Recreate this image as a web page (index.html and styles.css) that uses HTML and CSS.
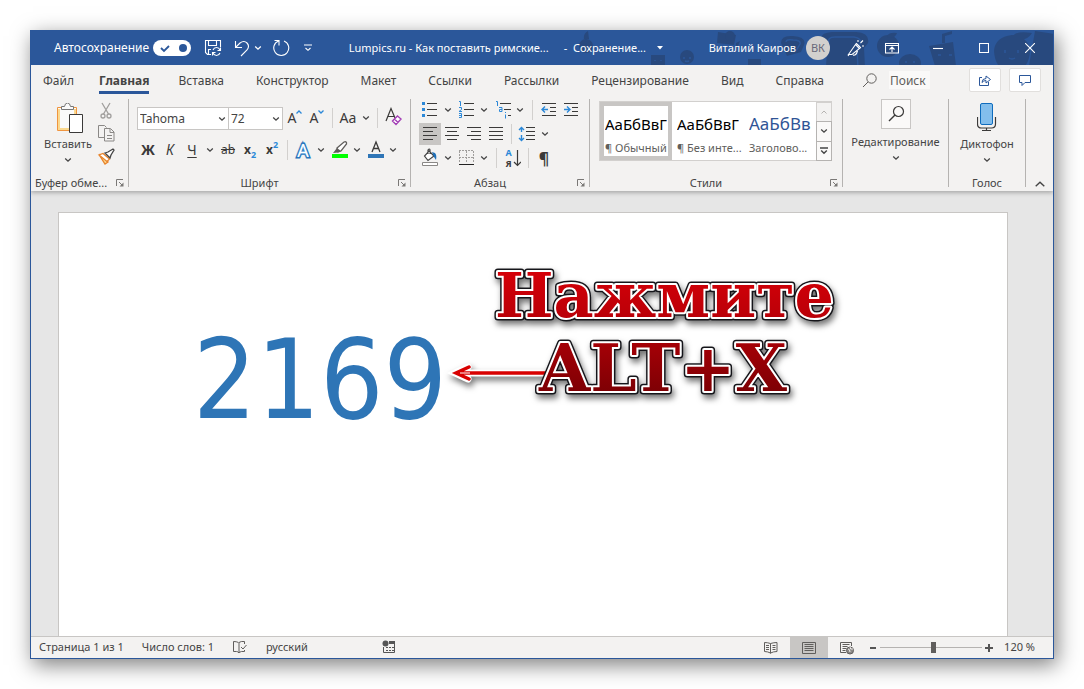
FILE: index.html
```html
<!DOCTYPE html>
<html lang="ru">
<head>
<meta charset="utf-8">
<title>Lumpics.ru - Как поставить римские цифры</title>
<link rel="stylesheet" href="styles.css">
</head>
<body>
<svg class="defs" aria-hidden="true">
  <symbol id="chev" viewBox="0 0 8 6"><path d="M1.2 1.5 4 4.2 6.8 1.5" fill="none" stroke="currentColor" stroke-width="1.3"/></symbol>
  <symbol id="launch" viewBox="0 0 8 8"><path d="M.5 7V.5H7M3 3l3 3" fill="none" stroke="#7a7876"/><path d="M7.500 3.500v4h-4z" fill="#7a7876"/></symbol>
</svg>
<div class="window">
  <header class="titlebar">
    <svg class="pattern" viewBox="0 0 510 35" aria-hidden="true">
      <g fill="#28497e">
        <circle cx="43" cy="15" r="7"/><path d="M41 8q-1-5 4-8l1 8zM108 24h14v11h-14z"/><circle cx="144" cy="26" r="7"/>
        <path d="M175 1l18 3-2 10-17-2zM193 12l4-2-4 10zM205 28h13v8h-13z"/><circle cx="187" cy="5" r="5"/>
        <path d="M238 12q0-8 12-7 14 1 11 9l-3 7-14 4zM280 12q-6-10 9-11h24q14 1 12 11l-4 5 1 20h-39l1-20z"/>
        <circle cx="345" cy="15" r="11"/><path d="M344 6q1-5 10-4-2 6-10 4zM386 15l24-4 3 24h-21zM399 12V3l10-3v3l-7 2v7z"/>
        <ellipse cx="367" cy="32" rx="11" ry="9"/><path d="M451 20q1-14 18-16 17 2 18 16-1 14-8 17h-20q-7-3-8-17zM469 7q2-8 20-5-6 10-20 5zM492 0l20 3v32h-26z"/>
      </g>
      <path d="M40 15v2m6-2v2m-4 2q1 1 2 0M112 29v1m6-1v1M141 26v2m6-2v2m-5 2q2 1 4 0M286 12q-2-6 6-6h19q8 1 6 7l-3 5 1 19M243 11q0-3 7-2 8 0 7 4l-4 7M342 14v2m8-2v2M363 30v2m8-2v2M462 19v3m13-3v3m-9 5q3 2 6 0M395 24h3m8 0h3" fill="none" stroke="#2b579a" stroke-width="1.5"/>
    </svg>
    <div class="quick">
      <label class="autosave">Автосохранение
        <input type="checkbox" class="autosave-box" checked>
        <svg width="38" height="16" viewBox="0 0 38 16"><rect width="38" height="16" rx="8" fill="#fff"/><circle cx="30" cy="8" r="4" fill="#2b579a"/><path d="m8 8 3 3 5-5" fill="none" stroke="#2b579a" stroke-width="1.8"/></svg>
      </label>
      <button class="tb save" aria-label="Сохранить"><svg width="18" height="18" viewBox="0 0 18 18"><path d="M7 15.500H3.500l-2-2v-12h15V8M4.500 1.500v5h8v-5M4.500 15.500v-5H7M16.500 8.500v3h-3M16 11q-1-2.500-3.500-2.500T9 11M8.500 16.500v-3h3M9 14q1 2.500 3.500 2.500T16 14"/></svg></button>
      <button class="tb undo" aria-label="Отменить"><svg width="16" height="18" viewBox="0 0 16 18"><path d="M1.500 2v6.500H8M2 8l4-4q4-3 7 0t0 7l-6 6"/></svg></button>
      <button class="tb undo-menu" aria-label="Список отмены"><svg width="8" height="6"><use href="#chev"/></svg></button>
      <button class="tb redo" aria-label="Повторить"><svg width="18" height="18" viewBox="0 0 18 18"><path d="M7 1.500H2.500M7 1v5.500M6.500 2A7.500 7.500 0 1 0 12 2"/></svg></button>
      <button class="tb" aria-label="Настройка панели"><svg width="8" height="8" viewBox="0 0 8 8"><path d="M0 1h8M1.500 4 4 6.300 6.500 4"/></svg></button>
    </div>
    <div class="doc-title"><span>Lumpics.ru - Как поставить римские...</span><span>-&nbsp; Сохранение...</span><svg width="8" height="4" viewBox="0 0 8 4"><path d="M1 0h6L4 3.500z" fill="#fff"/></svg></div>
    <div class="account">
      <span>Виталий Каиров</span><span class="avatar">ВК</span>
      <button class="tb pen" aria-label="Новые возможности"><svg width="18" height="18" viewBox="0 0 18 18"><path d="M1.500 15.500 8.500 5.500l4 4L5 15.500zM2 15.500l-1 1.500M8.500 5.500l1-1 4 4-1 1M6 16q3 1 4.500-4M11 3V1m2.500 3L16 1.500M15 7h2"/></svg></button>
    </div>
    <div class="controls">
      <button class="ctl" aria-label="Параметры ленты"><svg width="14" height="12" viewBox="0 0 14 12"><path d="M.5 1.500h13v9.500H.5zM.5 3.500h13M7 10V5.500M4.500 7.500 7 5l2.500 2.500"/></svg></button>
      <button class="ctl" aria-label="Свернуть"><svg width="10" height="10" viewBox="0 0 10 10"><path d="M0 5.500h10"/></svg></button>
      <button class="ctl" aria-label="Развернуть"><svg width="10" height="10" viewBox="0 0 10 10"><path d="M.5.5h9v9h-9z"/></svg></button>
      <button class="ctl" aria-label="Закрыть"><svg width="10" height="10" viewBox="0 0 10 10"><path d="m0 0 10 10M10 0 0 10"/></svg></button>
    </div>
  </header>

  <nav class="tabs">
    <button class="tab">Файл</button><button class="tab active">Главная</button><button class="tab">Вставка</button><button class="tab">Конструктор</button><button class="tab">Макет</button><button class="tab">Ссылки</button><button class="tab">Рассылки</button><button class="tab">Рецензирование</button><button class="tab">Вид</button><button class="tab">Справка</button>
    <label class="search"><svg width="14" height="14" viewBox="0 0 14 14"><circle cx="8.500" cy="5.500" r="4.700" fill="none" stroke="#605e5c"/><path d="M5 9 0 14" stroke="#605e5c"/></svg><input type="text" placeholder="Поиск" aria-label="Поиск"></label>
    <div class="share">
      <button aria-label="Поделиться"><svg width="14" height="12" viewBox="0 0 14 12"><path d="M4 3.500H1.500v8h9V8M4 8.500q0-4 4-4V2l4.500 3.500L8 9V6.500q-2.500 0-4 2z"/></svg></button>
      <button aria-label="Примечания"><svg width="12" height="12" viewBox="0 0 12 12"><path d="M.5 1.500h11v7H6l-3 3v-3H.5z"/></svg></button>
    </div>
  </nav>

  <section class="ribbon">
    <div class="group clipboard">
      <div class="body">
        <button class="big"><svg width="30" height="32" viewBox="-3 1 30 32"><path d="M1.500 5.500h19v23h-19z" fill="#fafafa" stroke="#f0953f"/><path d="M3 7v20h11M19 7v5" fill="none" stroke="#fbd98f" stroke-width="2"/><path d="M5.500 7.500v-3h3q.5-3.500 3-3.500t3 3.500h3v3z" fill="#fafafa" stroke="#777"/><path d="M13.500 12.500h13v18h-13z" fill="#fff" stroke="#3b3a39"/></svg><span>Вставить</span><svg width="8" height="6"><use href="#chev"/></svg></button>
        <div class="small-col">
          <button class="ic" aria-label="Вырезать"><svg viewBox="0 0 22 22"><g fill="none" stroke="#a19f9d" stroke-width="1.300"><path d="m7 4 6.500 11M15 4 8.500 15"/><circle cx="8" cy="17" r="2"/><circle cx="14" cy="17" r="2"/></g></svg></button>
          <button class="ic" aria-label="Копировать"><svg viewBox="0 0 22 22"><g fill="none" stroke="#8a8886"><path d="M9 15.500H3.500v-12h6l2 2M9.500 6.500h6l3.500 3.500v9H9.500zM15 7v3.500h4M12 13.500h5M12 16.500h5"/></g></svg></button>
          <button class="ic" aria-label="Формат по образцу"><svg viewBox="0 0 22 22"><path d="m5 10 8 7-3 2-5-8z" fill="#fbd98f" stroke="#e8832a" stroke-width="1.300"/><path d="M8 8.500 14.500 14 12 16.500 4 10z" fill="#fff" stroke="#e8832a" stroke-width="1.300"/><path d="m10 8 5 5M10 8l3-1 5-3 1 1-3 5-1 3z" fill="#fff" stroke="#444" stroke-width="1.300"/></svg></button>
        </div>
      </div>
      <footer><span>Буфер обме...</span><button aria-label="Буфер обмена"><svg width="8" height="8"><use href="#launch"/></svg></button></footer>
    </div>

    <div class="group font">
      <div class="body rows">
        <div class="row">
          <label class="combo family"><input type="text" value="Tahoma" aria-label="Шрифт"><svg width="8" height="6"><use href="#chev"/></svg></label><label class="combo size"><input type="text" value="72" aria-label="Размер"><svg width="8" height="6"><use href="#chev"/></svg></label>
          <button class="ic letter grow" aria-label="Увеличить">A<svg class="mark" width="6" height="4" viewBox="0 0 6 4"><path d="M.5 3.500 3 1l2.500 2.500" fill="none" stroke="#2b88d8" stroke-width="1.300"/></svg></button>
          <button class="ic letter" aria-label="Уменьшить">A<svg class="mark" width="6" height="4" viewBox="0 0 6 4"><path d="M.5.5 3 3 5.500.5" fill="none" stroke="#2b88d8" stroke-width="1.300"/></svg></button>
          <i class="sep"></i><button class="ic letter">Aa</button><button class="ch" aria-label="Регистр"><svg width="8" height="6"><use href="#chev"/></svg></button><i class="sep"></i>
          <button class="ic" aria-label="Очистить форматирование"><svg viewBox="0 0 22 22"><path d="m4 14 5-12.500L13 11M6 9.500h6" fill="none" stroke="#3b3a39" stroke-width="1.200"/><path d="m15.500 9 3.500 3-5 5.500-3.500-3.500zM12.500 12l3.500 3.500" fill="#fff" stroke="#a33fb5" stroke-width="1.400"/></svg></button>
        </div>
        <div class="row">
          <button class="ic letter bold">Ж</button><button class="ic letter italic">К</button><button class="ic letter underline">Ч</button><button class="ch" aria-label="Подчеркивание"><svg width="8" height="6"><use href="#chev"/></svg></button>
          <button class="ic strike">ab</button><button class="ic index">x<sub>2</sub></button><button class="ic index">x<sup>2</sup></button><i class="sep"></i>
          <button class="ic effect">A</button><button class="ch" aria-label="Эффекты"><svg width="8" height="6"><use href="#chev"/></svg></button>
          <button class="ic" aria-label="Цвет выделения"><svg viewBox="0 0 22 22"><path d="M4 15h16v4H4z" fill="#0f0"/><path d="m9 9 7-6q3-1 2.500 2L13 12l-3 1z" fill="#fff" stroke="#605e5c" stroke-width="1.300"/><path d="m9 9 4 3-3 1.500-5 .5z" fill="#605e5c"/></svg></button><button class="ch" aria-label="Цвета выделения"><svg width="8" height="6"><use href="#chev"/></svg></button>
          <button class="ic" aria-label="Цвет текста"><svg viewBox="0 0 22 22"><path d="M4 15h16v4H4z" fill="#2e75b6"/><path d="M8 13 12 3l4 10M9.500 9.500h5" fill="none" stroke="#3b3a39" stroke-width="1.300"/></svg></button><button class="ch" aria-label="Цвета текста"><svg width="8" height="6"><use href="#chev"/></svg></button>
        </div>
      </div>
      <footer><span>Шрифт</span><button aria-label="Шрифт"><svg width="8" height="8"><use href="#launch"/></svg></button></footer>
    </div>

    <div class="group para">
      <div class="body rows">
        <div class="row">
          <button class="ic" aria-label="Маркеры"><svg viewBox="0 0 22 22"><path d="M3 3h3v3H3zM3 9h3v3H3zM3 15h3v3H3z" fill="#2b88d8"/><path d="M8 4.500h10M8 10.500h10M8 16.500h10" stroke="#3b3a39"/></svg></button><button class="ch" aria-label="Виды маркеров"><svg width="8" height="6"><use href="#chev"/></svg></button>
          <button class="ic" aria-label="Нумерация"><svg viewBox="0 0 22 22"><path d="M9 4.500h10M9 10.500h10M9 16.500h10" stroke="#3b3a39"/><path d="M4 2.500h1.500V7M4 8.500h2.500v2L4 12.500h3M4 14.500h2.500v4H4m0-2h2.500" fill="none" stroke="#2b88d8"/></svg></button><button class="ch" aria-label="Виды номеров"><svg width="8" height="6"><use href="#chev"/></svg></button>
          <button class="ic" aria-label="Многоуровневый список"><svg viewBox="0 0 22 22"><path d="M9 4.500h11M13 10.500h7M17 16.500h3" stroke="#3b3a39"/><path d="M5 2.500h1.500V7M8 8.500h3v4H8.500v-2H11M14.500 13v1m0 1.500v4" fill="none" stroke="#2b88d8"/></svg></button><button class="ch" aria-label="Виды списков"><svg width="8" height="6"><use href="#chev"/></svg></button><i class="sep wide"></i>
          <button class="ic" aria-label="Уменьшить отступ"><svg viewBox="0 0 22 22"><path d="M4 4.500h14M12 8.500h6M12 12.500h6M4 16.500h14" stroke="#3b3a39"/><path d="M4 10.500h6M7 7.500l-3 3 3 3" fill="none" stroke="#2b88d8" stroke-width="1.400"/></svg></button><button class="ic" aria-label="Увеличить отступ"><svg viewBox="0 0 22 22"><path d="M4 4.500h14M12 8.500h6M12 12.500h6M4 16.500h14" stroke="#3b3a39"/><path d="M4 10.500h6M7 7.500l3 3-3 3" fill="none" stroke="#2b88d8" stroke-width="1.400"/></svg></button>
        </div>
        <div class="row">
          <button class="ic on" aria-label="По левому краю"><svg viewBox="0 0 22 22"><path d="M4 4.500h14M4 8.500h10M4 12.500h14M4 16.500h10" stroke="#3b3a39"/></svg></button><button class="ic" aria-label="По центру"><svg viewBox="0 0 22 22"><path d="M4 4.500h14M6 8.500h10M4 12.500h14M6 16.500h10" stroke="#3b3a39"/></svg></button><button class="ic" aria-label="По правому краю"><svg viewBox="0 0 22 22"><path d="M4 4.500h14M8 8.500h10M4 12.500h14M8 16.500h10" stroke="#3b3a39"/></svg></button><button class="ic" aria-label="По ширине"><svg viewBox="0 0 22 22"><path d="M4 4.500h14M4 8.500h14M4 12.500h14M4 16.500h14" stroke="#3b3a39"/></svg></button><i class="sep"></i>
          <button class="ic" aria-label="Интервал"><svg viewBox="0 0 22 22"><path d="M10 4.500h9M10 8.500h9M10 12.500h9M10 16.500h9" stroke="#3b3a39"/><path d="M5.500 4v5M3 7l2.500-2.500L8 7M5.500 12v5.500M3 15l2.500 2.500L8 15" fill="none" stroke="#2b88d8" stroke-width="1.400"/></svg></button><button class="ch" aria-label="Интервалы"><svg width="8" height="6"><use href="#chev"/></svg></button>
        </div>
        <div class="row">
          <button class="ic" aria-label="Заливка"><svg viewBox="0 0 22 22"><path d="M3.500 15.500h15v3h-15z" fill="#fff" stroke="#8a8886"/><path d="m10 4 5 5-6 4.500-3.500-4.500zM9 7V3q1.500-2 2 0v4" fill="#fff" stroke="#444" stroke-width="1.200"/><path d="m13 5 3 1q2 2 1 7l-2-3z" fill="#1e6fb8"/></svg></button><button class="ch" aria-label="Цвета заливки"><svg width="8" height="6"><use href="#chev"/></svg></button>
          <button class="ic" aria-label="Границы"><svg viewBox="0 0 22 22"><path d="M4.500 4v12M11.500 4v12M18.500 4v12M4 3.500h15M4 10.500h15" stroke="#a19f9d" stroke-dasharray="2 1"/><path d="M4 17.500h15" stroke="#222"/></svg></button><button class="ch" aria-label="Виды границ"><svg width="8" height="6"><use href="#chev"/></svg></button><i class="sep wide"></i>
          <button class="ic sort" aria-label="Сортировка"><span><b>А</b><b>Я</b></span><svg viewBox="0 0 8 18"><path d="M4.500 1v15M1 13l3.500 3.500L8 13" fill="none" stroke="#3b3a39" stroke-width="1.200"/></svg></button><i class="sep"></i><button class="ic pilcrow">¶</button>
        </div>
      </div>
      <footer><span>Абзац</span><button aria-label="Абзац"><svg width="8" height="8"><use href="#launch"/></svg></button></footer>
    </div>

    <div class="group styles">
      <div class="body">
        <div class="gallery">
          <button class="style on"><b>АаБбВвГ</b><span>¶ Обычный</span></button><button class="style"><b>АаБбВвГ</b><span>¶ Без инте...</span></button><button class="style heading"><b>АаБбВв</b><span>Заголово...</span></button>
          <div class="scroller"><button class="off" aria-label="Вверх"><svg width="8" height="6" viewBox="0 0 8 6"><path d="M1.500 4.500 4 2l2.500 2.500" fill="none" stroke="currentColor"/></svg></button><button aria-label="Вниз"><svg width="8" height="6"><use href="#chev"/></svg></button><button aria-label="Все стили"><svg width="8" height="8" viewBox="0 0 8 8"><path d="M0 1h8M1.200 3.500 4 6.200l2.800-2.700" fill="none" stroke="currentColor" stroke-width="1.400"/></svg></button></div>
        </div>
      </div>
      <footer><span>Стили</span><button aria-label="Стили"><svg width="8" height="8"><use href="#launch"/></svg></button></footer>
    </div>

    <div class="group editing">
      <div class="body"><button class="big"><span class="frame"><svg width="18" height="18" viewBox="0 0 18 18"><circle cx="11.500" cy="6.500" r="5" fill="none" stroke="#3b3a39" stroke-width="1.200"/><path d="m8 10-6 6" stroke="#3b3a39" stroke-width="1.400"/></svg></span><span>Редактирование</span><svg width="8" height="6"><use href="#chev"/></svg></button></div>
    </div>

    <div class="group voice">
      <div class="body"><button class="big"><svg width="20" height="32" viewBox="0 1 20 32"><rect x="3.500" y="1.500" width="12" height="21" rx="1.500" fill="#83beec" stroke="#0f6cbd"/><path d="M.5 15v7q0 4 4 4h10q4 0 4-4v-7M9.500 26v3M5 28.500h9" fill="none" stroke="#3b3a39" stroke-width="1.200"/></svg><span>Диктофон</span><svg width="8" height="6"><use href="#chev"/></svg></button></div>
      <footer><span>Голос</span></footer>
    </div>
    <button class="collapse" aria-label="Свернуть ленту"><svg width="10" height="6" viewBox="0 0 10 6"><path d="m.7 5.300 4.300-4 4.300 4" fill="none" stroke="currentColor" stroke-width="1.400"/></svg></button>
  </section>

  <main class="canvas">
    <article class="page">
      <p class="number">2169</p>
      <svg class="callout" width="420" height="160" viewBox="0 0 420 160" role="img">
        <defs>
          <linearGradient id="red" gradientUnits="userSpaceOnUse" x1="0" y1="10" x2="0" y2="145"><stop offset="0" stop-color="#dc0008"/><stop offset=".4" stop-color="#bd0008"/><stop offset="1" stop-color="#7c0004"/></linearGradient>
          <g id="words"><text x="55" y="68">Нажмите</text><text class="keys" x="99" y="142">ALT+X</text></g>
        </defs>
        <g class="drop">
          <path d="M110 124H18M28 118l-13 6 13 6" fill="none" stroke="#fff" stroke-width="7" stroke-linecap="round"/>
          <path d="M110 124H18M29 118l-13 6 13 6" fill="none" stroke="#d80000" stroke-width="3.500" stroke-linecap="round"/>
          <path d="M30 124H20" stroke="#fff"/>
        </g>
        <g class="drop words">
          <use href="#words" stroke="#15151a" stroke-width="7"/>
          <use href="#words" stroke="#fff" stroke-width="4"/>
          <use href="#words" fill="url(#red)"/>
        </g>
      </svg>
    </article>
  </main>

  <footer class="status">
    <div class="info"><span>Страница 1 из 1</span><span>Число слов: 1</span><svg width="16" height="14" viewBox="0 0 16 14" class="line"><path d="M6.500 2.500q-2-1-5-1v10h3q1.500 0 2.500 1.500V2.500q2-1.500 5.500-1V4M7 12.500q2-1.500 5.500-1V10M9 7l2 2L14.500 5"/></svg><span>русский</span><svg width="14" height="14" viewBox="0 0 14 14" class="macro"><path d="M1.500 7v5.500h11V4" fill="none" stroke="#555"/><path d="M4 7.500h8M4 10.500h8" stroke="#555" stroke-dasharray="2 1"/><path d="M7 1h6v3H7z" fill="#555"/><circle cx="3.500" cy="3.500" r="3" fill="#555"/></svg></div>
    <div class="views">
      <button aria-label="Режим чтения"><svg width="14" height="14" viewBox="0 0 14 14" class="line"><path d="M6.500 2.500q-3-1-6-1v9q3 0 6 1.500 3-1.500 6.500-1.500v-9q-3 0-6.500 1zv10M2 4.500h3M2 6.500h3M2 8.500h3M8.500 4.500h3M8.500 6.500h3M8.500 8.500h3"/></svg></button>
      <button class="on" aria-label="Разметка страницы"><svg width="14" height="14" viewBox="0 0 14 14" class="line"><path d="M.5 1.500h13v11H.5zM2.500 3.500h9M2.500 5.500h9M2.500 7.500h9M2.500 9.500h9"/></svg></button>
      <button aria-label="Веб-документ"><svg width="14" height="14" viewBox="0 0 14 14" class="line"><path d="M6 11.500H.5v-10h11V5M2.500 3.500h7M2.500 5.500h5M2.500 7.500h4M2.500 9.500h3"/><circle cx="10" cy="9.500" r="3.500" fill="#8a8886"/><path d="M8 8q2 0 2 3M10 6q0 3 3 2" stroke="#f3f2f1"/></svg></button>
      <button class="zoom" aria-label="Уменьшить"><svg width="8" height="8" viewBox="0 0 8 8"><path d="M1 4h6" stroke="#555" stroke-width="2"/></svg></button><input type="range" min="10" max="230" value="125" aria-label="Масштаб"><button class="zoom" aria-label="Увеличить"><svg width="8" height="8" viewBox="0 0 8 8"><path d="M0 4h8M4 0v8" stroke="#555" stroke-width="2"/></svg></button><span class="percent">120 %</span>
    </div>
  </footer>
</div>
</body>
</html>
```
FILE: styles.css
```css
* { box-sizing: border-box; }
body { margin: 0; padding: 30px; min-height: 100vh; display: flex; background: #fff; font: 11px/16px "Noto Sans", "Open Sans", sans-serif; color: #444; }
button, input { font: inherit; color: inherit; margin: 0; padding: 0; border: 0; background: none; }
button { display: flex; align-items: center; justify-content: center; flex: none; }
svg { display: block; flex: none; }
.defs { position: absolute; width: 0; height: 0; }
.window { flex: 1; min-width: 0; display: flex; flex-direction: column; border: 1px solid #2b579a; background: #f3f2f1; box-shadow: 3px 6px 20px rgba(0, 0, 0, .5); }

.titlebar { position: relative; display: flex; align-items: center; height: 34px; background: #2b579a; color: #fff; white-space: nowrap; padding-left: 23px; overflow: hidden; }
.titlebar > div { position: relative; display: flex; align-items: center; }
.titlebar > .pattern { position: absolute; right: 0; top: 0; width: 510px; height: 35px; }
.titlebar button path { fill: none; stroke: currentColor; stroke-width: 1.1; }
.autosave { display: flex; align-items: center; gap: 4px; font-size: 12px; }
.autosave-box { position: absolute; opacity: 0; }
.save { margin-left: 13px; }
.undo { margin-left: 12px; }
.undo-menu { margin-left: 4px; }
.redo { margin: 0 14px 0 10px; }
.doc-title { margin-left: auto; gap: 10px; }
.doc-title span + span { margin-left: 5px; }
.account { margin-left: auto; padding-left: 8px; gap: 10px; }
.avatar { width: 24px; height: 24px; border-radius: 50%; background: #d2d0ce; color: #69697a; text-align: center; line-height: 24px; }
.pen { margin: 0 4px 0 7px; }
.ctl { width: 46px; height: 34px; }

.tabs { display: flex; align-items: center; height: 32px; padding: 0 12px 2px; font-size: 12px; white-space: nowrap; }
.tab { height: 27px; margin-right: 32px; border-top: 4px solid transparent; border-bottom: 3px solid transparent; }
.tab:first-child { margin-right: 25px; }
.tab.active { margin-right: 29px; font-weight: 700; border-bottom-color: #2b579a; }
.search { display: flex; align-items: center; gap: 12px; margin-left: 7px; flex: 1; }
.search input { width: 41px; height: 18px; padding-left: 1px; background: #faf9f8; }
.search input::placeholder { color: #605e5c; opacity: 1; }
.share { display: flex; gap: 8px; }
.share button { width: 32px; height: 24px; background: #fff; border: 1px solid #e1dfdd; border-radius: 2px; }
.share path { fill: none; stroke: #2b579a; }

.ribbon { position: relative; z-index: 1; display: flex; padding: 2px 0 4px; box-shadow: 0 2px 4px rgba(0, 0, 0, .25); clip-path: inset(0 0 -8px 0); }
.group { display: flex; flex-direction: column; min-height: 88px; border-right: 1px solid #b5b3b1; }
.body { display: flex; flex: 1; align-items: flex-start; }
.rows { flex-direction: column; gap: 2px; }
.row { display: flex; align-items: center; height: 22px; }
.group footer { display: flex; align-items: center; height: 8px; padding: 0 4px; }
.group footer span { flex: 1; text-align: center; white-space: nowrap; }
.clipboard { width: 98px; }
.clipboard footer span { text-align: left; }
.clipboard .big { width: 70px; margin-left: 2px; }
.font { width: 282px; }
.font .rows { padding: 8px 0 0 8px; gap: 10px; }
.font footer, .para footer, .styles footer { padding-left: 0; }
.font footer span, .para footer span, .styles footer span { padding-right: 8px; }
.para { width: 179px; }
.para .rows { padding-left: 8px; }
.styles { width: 253px; }
.styles .body { padding: 2px 10px 0 9px; }
.editing { width: 106px; }
.voice { width: 77px; }
.big { flex-direction: column; padding-top: 4px; width: 100%; }
.big > span { line-height: 18px; }
.big > svg:last-child { margin-top: 4px; }
.editing .big { padding-top: 0; }
.editing .frame { display: flex; align-items: center; justify-content: center; width: 30px; height: 30px; margin-bottom: 4px; border: 1px solid #c8c6c4; background: #faf9f8; }
.small-col { display: flex; flex-direction: column; gap: 1px; margin-left: -8px; }
.ic { width: 22px; height: 22px; color: #3b3a39; }
.ic > svg { width: 22px; height: 22px; }
.on { background: #c8c6c4; }
.ch { width: 14px; height: 22px; }
.sep { width: 1px; height: 20px; margin: 0 4px; background: #d2d0ce; }
.sep.wide { margin: 0 5px; }
.combo { position: relative; height: 23px; border: 1px solid #c8c6c4; background: #fff; font-size: 12px; }
.combo input { width: 100%; height: 21px; padding-left: 2px; display: block; }
.combo svg { position: absolute; right: 2px; top: 8px; }
.family { width: 92px; }
.size { width: 54px; border-left: 0; }
.grow { margin-left: 1px; }
.letter { font-size: 14px; }
.letter > .mark { width: 6px; height: 4px; margin-bottom: 12px; }
.row .ic.bold { font-weight: 700; }
.italic { font-style: italic; }
.underline { text-decoration: underline; text-underline-offset: 2px; }
.strike { font-size: 12px; text-decoration: line-through; }
.index { font-size: 12px; font-weight: 700; }
.index sub, .index sup { font-size: 9px; line-height: 10px; color: #2b88d8; }
.index sub { margin-top: 10px; }
.index sup { margin-bottom: 10px; }
.row .effect { font-size: 18px; color: #fff; -webkit-text-stroke: 3px #1e6fb8; paint-order: stroke fill; text-shadow: 0 0 2px #7fc0f0; }
.sort { gap: 1px; }
.sort span { display: flex; flex-direction: column; font-size: 9px; line-height: 11px; }
.sort b:first-child { color: #2b88d8; }
.sort > svg { width: 8px; height: 18px; }
.pilcrow { font-size: 16px; font-weight: 700; }
.gallery { display: flex; flex: 1; min-width: 0; height: 60px; border: 1px solid #d2d0ce; background: #fff; }
.style { flex: 1 1 0; min-width: 0; flex-direction: column; align-items: flex-start; justify-content: flex-start; padding: 11px 5px 0 5px; background: none; }
.style.on { border: 4px solid #c8c6c4; padding: 7px 1px 0 1px; }
.style b { width: 100%; overflow: hidden; text-align: left; white-space: nowrap; font: 15px/22px "Noto Sans", sans-serif; color: #000; }
.style span { margin-top: 5px; line-height: 16px; white-space: nowrap; color: #605e5c; }
.style.heading b { font-size: 17px; color: #2f5496; }
.scroller { flex: none; width: 15px; display: flex; flex-direction: column; }
.scroller button { flex: 1; border: 1px solid #b5b3b1; background: #faf9f8; margin: 0 -1px -1px 0; }
.scroller .off { color: #b5b3b1; border-color: #d2d0ce; background: #f3f2f1; }
.collapse { align-self: flex-end; margin: 0 auto; height: 6px; }

.canvas { flex: 1; display: flex; padding: 21px 45px 0 27px; background: #e6e6e6; }
.page { position: relative; flex: 1; border: 1px solid #c8c6c4; border-bottom: 0; background: #fff; }
.number { margin: 103px 0 0 134px; font: 111px/128px "DejaVu Sans Condensed", "DejaVu Sans", sans-serif; color: #2e75b6; }
.callout { position: absolute; left: 381px; top: 36px; }
.drop { filter: drop-shadow(2px 4px 3px rgba(0, 0, 0, .55)); }
.words { font: 700 62px "DejaVu Serif", serif; stroke-linejoin: round; }
.keys { font-size: 66px; }

.status { display: flex; justify-content: space-between; height: 22px; border-top: 1px solid #c8c6c4; white-space: nowrap; padding: 0 18px 0 8px; }
.info, .views { display: flex; align-items: center; }
.info { padding-bottom: 2px; }
.info span:nth-of-type(2) { margin: 0 18px; }
.info span:nth-of-type(3) { margin-left: 18px; }
.macro { margin-left: 74px; }
.line { fill: none; stroke: #605e5c; }
.views button { width: 38px; height: 21px; }
.views .zoom { width: 14px; }
.views input { appearance: none; width: 102px; height: 12px; background: linear-gradient(#b5b3b1, #b5b3b1) center / 100% 1px no-repeat; }
.views input::-webkit-slider-thumb { appearance: none; width: 5px; height: 11px; background: #605e5c; }
.percent { margin-left: 8px; padding-bottom: 2px; }
```
